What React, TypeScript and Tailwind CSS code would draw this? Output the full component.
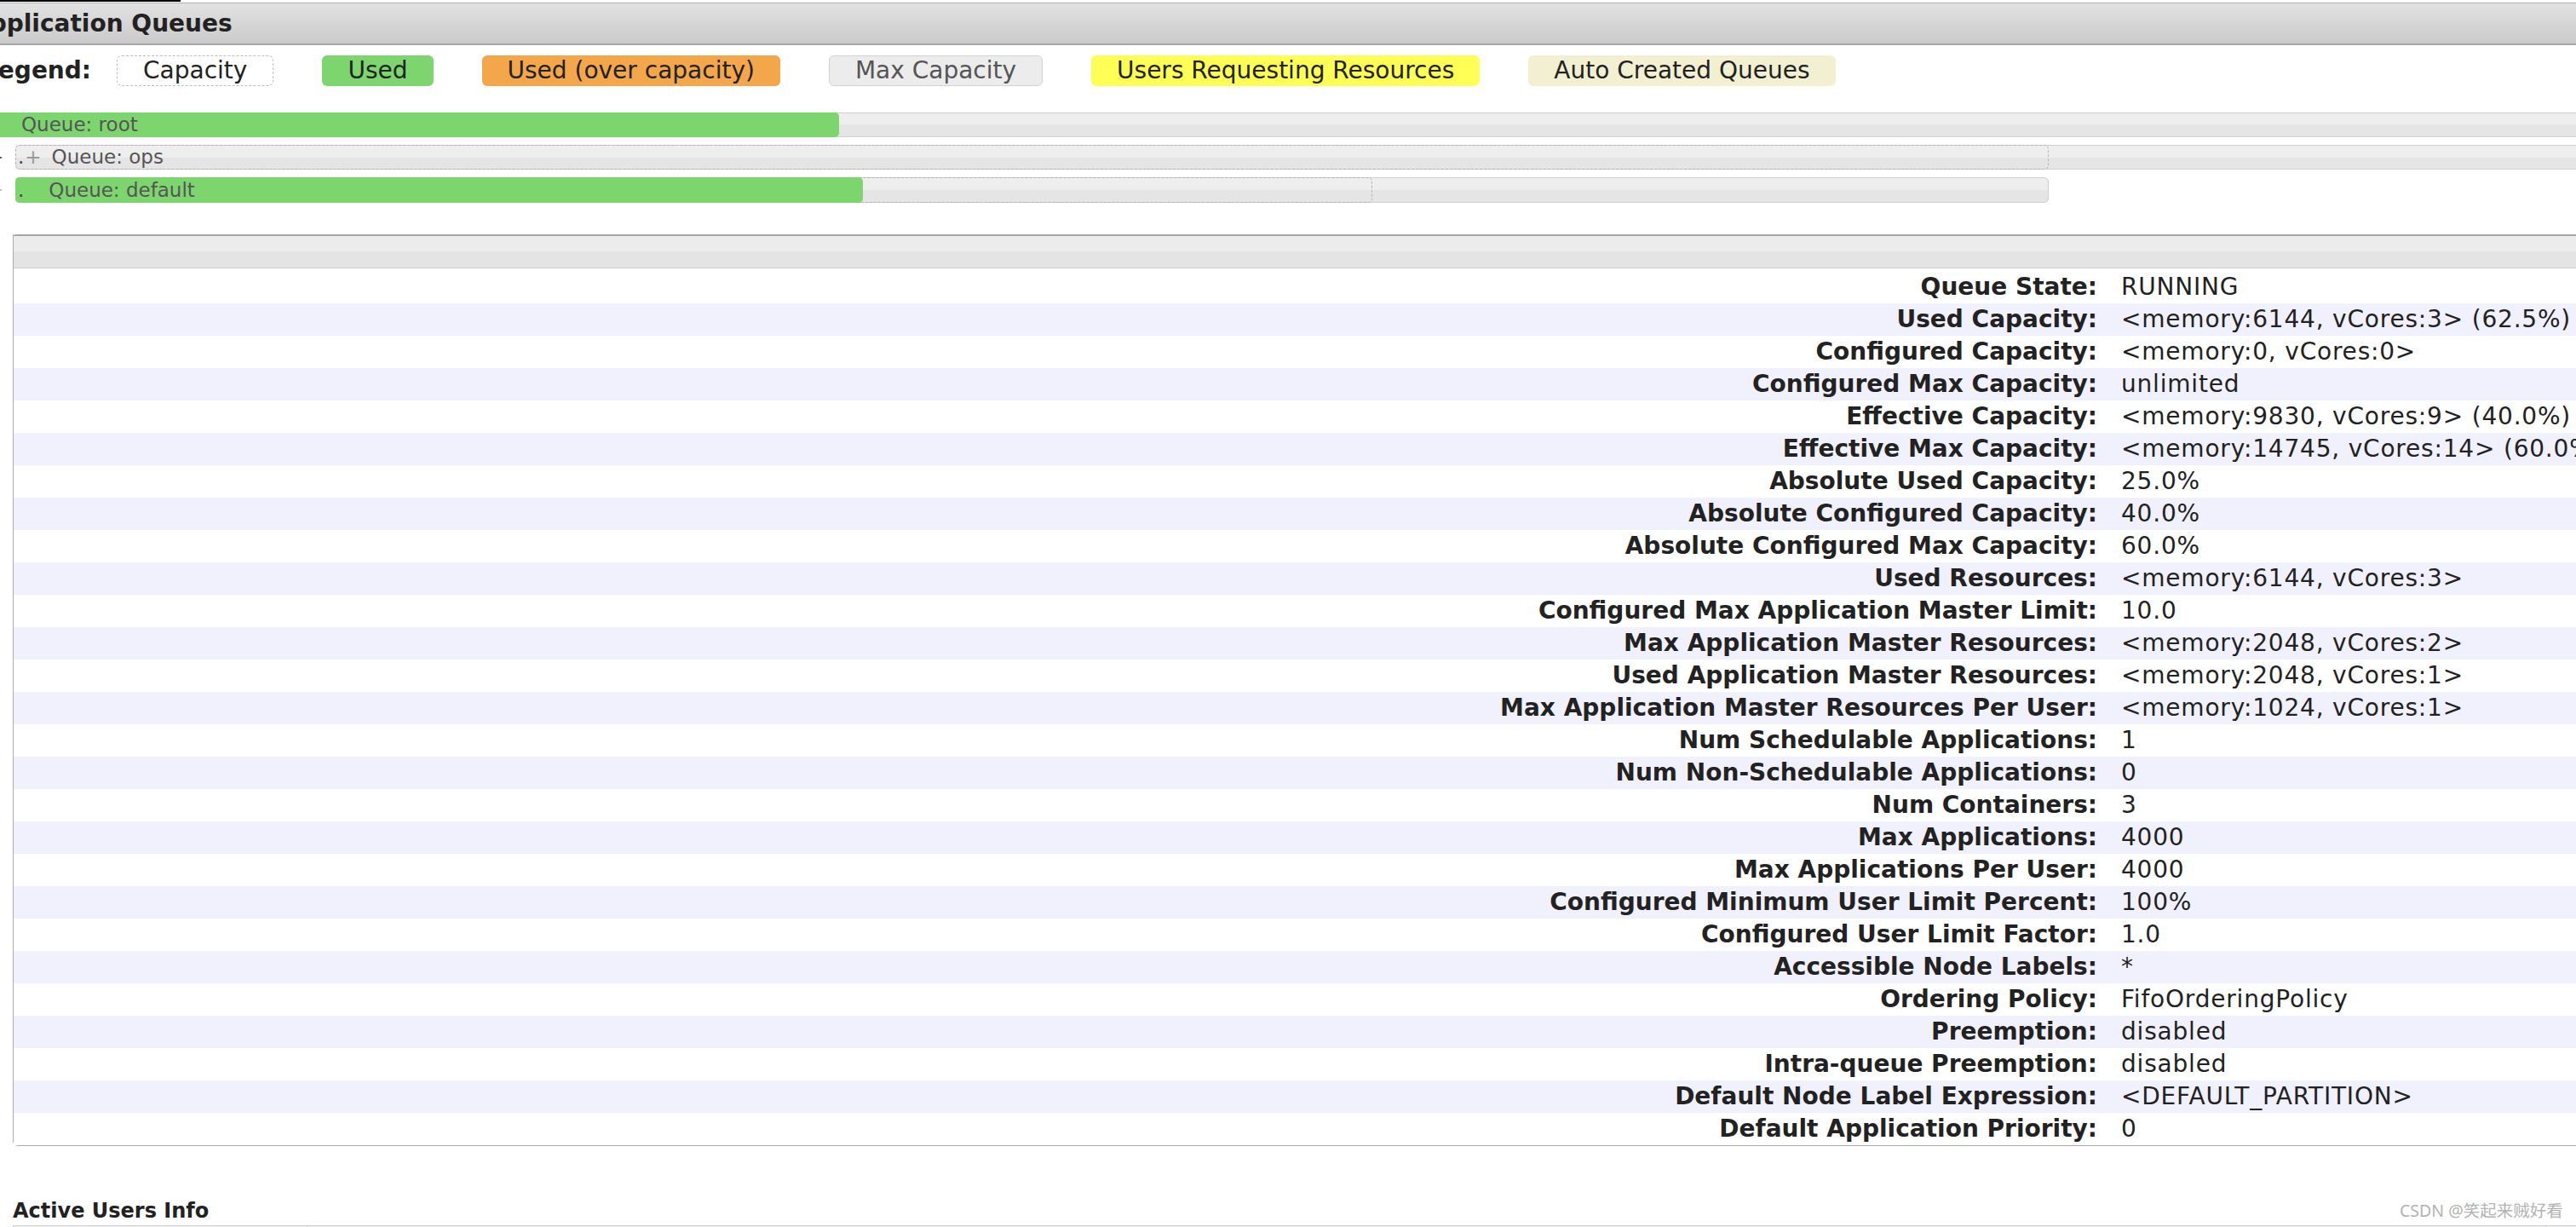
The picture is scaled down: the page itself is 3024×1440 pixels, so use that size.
import React from "react";

const rows: [string, string][] = [
  ["Queue State:", "RUNNING"],
  ["Used Capacity:", "<memory:6144, vCores:3> (62.5%)"],
  ["Configured Capacity:", "<memory:0, vCores:0>"],
  ["Configured Max Capacity:", "unlimited"],
  ["Effective Capacity:", "<memory:9830, vCores:9> (40.0%)"],
  ["Effective Max Capacity:", "<memory:14745, vCores:14> (60.0%)"],
  ["Absolute Used Capacity:", "25.0%"],
  ["Absolute Configured Capacity:", "40.0%"],
  ["Absolute Configured Max Capacity:", "60.0%"],
  ["Used Resources:", "<memory:6144, vCores:3>"],
  ["Configured Max Application Master Limit:", "10.0"],
  ["Max Application Master Resources:", "<memory:2048, vCores:2>"],
  ["Used Application Master Resources:", "<memory:2048, vCores:1>"],
  ["Max Application Master Resources Per User:", "<memory:1024, vCores:1>"],
  ["Num Schedulable Applications:", "1"],
  ["Num Non-Schedulable Applications:", "0"],
  ["Num Containers:", "3"],
  ["Max Applications:", "4000"],
  ["Max Applications Per User:", "4000"],
  ["Configured Minimum User Limit Percent:", "100%"],
  ["Configured User Limit Factor:", "1.0"],
  ["Accessible Node Labels:", "*"],
  ["Ordering Policy:", "FifoOrderingPolicy"],
  ["Preemption:", "disabled"],
  ["Intra-queue Preemption:", "disabled"],
  ["Default Node Label Expression:", "<DEFAULT_PARTITION>"],
  ["Default Application Priority:", "0"],
];

const legend = [
  { label: "Capacity", cls: "bg-white border border-dashed border-[#bdbdbd] text-[#222]" },
  { label: "Used", cls: "bg-[#7dd56e] text-[#222]" },
  { label: "Used (over capacity)", cls: "bg-[#f4a64a] text-[#222]" },
  { label: "Max Capacity", cls: "bg-[#ececec] border border-[#d2d2d2] text-[#555]" },
  { label: "Users Requesting Resources", cls: "bg-[#ffff55] text-[#222]" },
  { label: "Auto Created Queues", cls: "bg-[#f3f0d2] text-[#222]" },
];

const barBg = "bg-[linear-gradient(#eeeeee_0%,#eeeeee_50%,#e5e5e5_50%,#e5e5e5_100%)]";

export default function App() {
  return (
    <div className="relative h-[1440px] w-[3024px] overflow-hidden bg-white font-['DejaVu_Sans',Verdana,sans-serif] text-[#222]">
      {/* tab underline */}
      <div className="h-[3px]">
        <div className="h-[2px] w-[212px] bg-black" />
      </div>

      {/* section header */}
      <div className="flex h-[50px] items-center border-t border-b-2 border-t-[#b0b0b0] border-b-[#a6a6a6] bg-[linear-gradient(#e2e2e2,#cacaca)]">
        <h3 className="ml-[-34px] whitespace-nowrap text-[28px] font-bold leading-none text-[#222]">Application Queues</h3>
      </div>

      {/* legend */}
      <div className="mt-[12px] flex h-[36px] items-center whitespace-nowrap text-[28px]">
        <span className="ml-[-20px] font-bold">Legend:</span>
        <div className="ml-[30px] flex gap-[57px]">
          {legend.map((l) => (
            <span key={l.label} className={`flex h-[36px] items-center rounded-[6px] px-[30px] leading-none ${l.cls}`}>
              {l.label}
            </span>
          ))}
        </div>
      </div>

      {/* queue tree */}
      <div className="mt-[31px] flex flex-col gap-[9px] whitespace-nowrap text-[23px] text-[#555]">
        <div className={`relative flex h-[29px] items-center border-y border-[#d0d0d0] ${barBg}`}>
          <div className="absolute left-0 top-[-1px] h-[29px] w-[985px] rounded-r-[5px] bg-[#7dd56e]" />
          <span className="relative pl-[25px]">Queue: root</span>
        </div>

        <div className="flex items-center">
          <div className="ml-[-6px] h-0 w-0 border-y-[4px] border-l-[9px] border-y-transparent border-l-[#444]" />
          <div className={`relative ml-[15px] flex h-[29px] flex-1 items-center rounded-l-[5px] border-y border-[#d0d0d0] ${barBg}`}>
            <div className="absolute inset-y-[-1px] left-0 w-[2387px] rounded-[5px] border border-dashed border-[#b5b5b5]" />
            <span className="relative pl-[3px] text-[#444]">.</span>
            <span className="relative pl-[1px] text-[#999]">+</span>
            <span className="relative pl-[12px]">Queue: ops</span>
          </div>
        </div>

        <div className="flex items-center">
          <div className="ml-[-6px] h-0 w-0 border-y-[4px] border-l-[9px] border-y-transparent border-l-[#bbb]" />
          <div className={`relative ml-[15px] flex h-[30px] w-[2387px] items-center rounded-[5px] border border-[#cfcfcf] ${barBg}`}>
            <div className="absolute inset-y-[-1px] left-[-1px] w-[1593px] rounded-[5px] border border-dashed border-[#b5b5b5]" />
            <div className="absolute inset-y-[-1px] left-[-1px] w-[995px] rounded-[5px] bg-[#7dd56e]" />
            <span className="relative pl-[2px] text-[#444]">.</span>
            <span className="relative pl-[29px]">Queue: default</span>
          </div>
        </div>
      </div>

      {/* queue info table */}
      <div className="ml-[15px] mt-[37px] rounded-bl-[6px] border-b border-l border-[#ababab]">
        <div className="h-[40px] rounded-tl-[2px] border-t-2 border-b border-t-[#a5a5a5] border-b-[#cdcdcd] bg-[linear-gradient(#ececec_0%,#ececec_50%,#e4e4e4_50%,#e4e4e4_100%)]" />
        <div className="mt-[3px]">
          {rows.map(([k, v], i) => (
            <div key={k} className={`flex h-[38px] items-center whitespace-nowrap text-[28px] ${i % 2 === 1 ? "bg-[#f1f1fd]" : "bg-white"}`}>
              <div className="w-[2446px] shrink-0 text-right font-bold">{k}</div>
              <div className="pl-[28px] tracking-[0.8px]">{v}</div>
            </div>
          ))}
        </div>
      </div>

      <h3 className="ml-[15px] mt-[61px] text-[24px] font-bold leading-[30px]">Active Users Info</h3>
      <div className="ml-[15px] mt-[2px] flex h-[20px] border-l border-t border-[#cfcfcf] bg-[#efefef]">
        <div className="w-[345px] border-r border-[#cfcfcf]" />
        <div className="w-[2628px] border-r border-[#cfcfcf]" />
      </div>

      <span className="absolute left-[2817px] top-[1407px] whitespace-nowrap font-['Noto_Sans','Noto_Sans_CJK_SC',sans-serif] text-[19.5px] leading-[28px] text-[#b3b3b3]">
        CSDN @笑起来贼好看
      </span>
    </div>
  );
}
